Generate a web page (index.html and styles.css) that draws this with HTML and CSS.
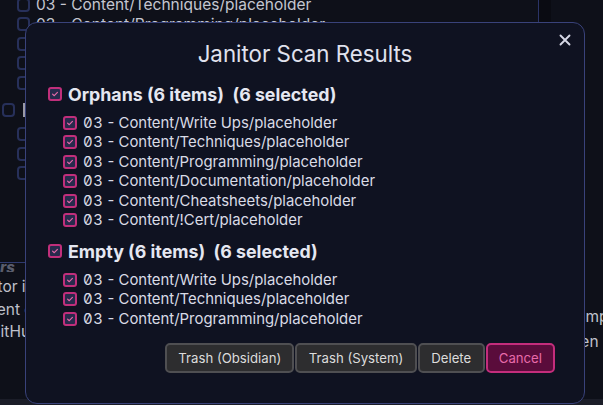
FILE: index.html
```html
<!DOCTYPE html>
<html>
<head>
<meta charset="utf-8">
<link rel="stylesheet" href="styles.css">
</head>
<body>
<div class="page">
  <div class="top">
    <div class="listpane">
      <div class="bg-row shift-up"><span class="bg-cb"></span><span>03 - Content/Techniques/placeholder</span></div>
      <div class="bg-row"><span class="bg-cb"></span><span>03 - Content/Programming/placeholder</span></div>
      <div class="bg-row"><span class="bg-cb"></span><span>03 - Content/Documentation/placeholder</span></div>
      <div class="bg-row"><span class="bg-cb"></span><span>03 - Content/Cheatsheets/placeholder</span></div>
      <div class="bg-row"><span class="bg-cb"></span><span>03 - Content/!Cert/placeholder</span></div>
      <div class="bg-group"><span class="bg-cb"></span><span class="bg-bar"></span><span>Empty (3 items)</span></div>
      <div class="bg-row"><span class="bg-cb"></span><span>03 - Content/Write Ups/placeholder</span></div>
      <div class="bg-row"><span class="bg-cb"></span><span>03 - Content/Techniques/placeholder</span></div>
      <div class="bg-row"><span class="bg-cb"></span><span>03 - Content/Programming/placeholder</span></div>
    </div>
    <div class="scroll-strip"></div>
    <div class="rightpane"></div>
  </div>
  <div class="doc">
    <div class="doc-left">
      <div class="doc-heading">Cursors</div>
      <p class="doc-line l1">Janitor is a plugin</p>
      <p class="doc-line l2">Content cleanup</p>
      <p class="doc-line l3">GitHub page</p>
    </div>
    <div class="doc-right">
      <p class="doc-line r1">Example</p>
      <p class="doc-line r2">Open page</p>
    </div>
  </div>
  <div class="statusbar"></div>
</div>

<div class="modal">
  <button class="close" aria-label="Close">
    <svg width="12" height="12" viewBox="0 0 12 12"><path d="M1.5 1.5 L10.5 10.5 M10.5 1.5 L1.5 10.5" stroke="#d6d8e6" stroke-width="1.9" stroke-linecap="round"/></svg>
  </button>
  <h1 class="title">Janitor Scan Results</h1>

  <div class="group">
    <label class="group-head"><span class="cb"><svg viewBox="0 0 14 14"><path d="M3.6 7.2 L6 9.4 L10.4 4.8" /></svg></span>Orphans (6 items)&nbsp; (6 selected)</label>
    <div class="items">
      <label class="item"><span class="cb"><svg viewBox="0 0 14 14"><path d="M3.6 7.2 L6 9.4 L10.4 4.8" /></svg></span><span class="num">03</span>&nbsp;- Content/Write Ups/placeholder</label>
      <label class="item"><span class="cb"><svg viewBox="0 0 14 14"><path d="M3.6 7.2 L6 9.4 L10.4 4.8" /></svg></span><span class="num">03</span>&nbsp;- Content/Techniques/placeholder</label>
      <label class="item"><span class="cb"><svg viewBox="0 0 14 14"><path d="M3.6 7.2 L6 9.4 L10.4 4.8" /></svg></span><span class="num">03</span>&nbsp;- Content/Programming/placeholder</label>
      <label class="item"><span class="cb"><svg viewBox="0 0 14 14"><path d="M3.6 7.2 L6 9.4 L10.4 4.8" /></svg></span><span class="num">03</span>&nbsp;- Content/Documentation/placeholder</label>
      <label class="item"><span class="cb"><svg viewBox="0 0 14 14"><path d="M3.6 7.2 L6 9.4 L10.4 4.8" /></svg></span><span class="num">03</span>&nbsp;- Content/Cheatsheets/placeholder</label>
      <label class="item"><span class="cb"><svg viewBox="0 0 14 14"><path d="M3.6 7.2 L6 9.4 L10.4 4.8" /></svg></span><span class="num">03</span>&nbsp;- Content/!Cert/placeholder</label>
    </div>
  </div>

  <div class="group">
    <label class="group-head"><span class="cb"><svg viewBox="0 0 14 14"><path d="M3.6 7.2 L6 9.4 L10.4 4.8" /></svg></span>Empty (6 items)&nbsp; (6 selected)</label>
    <div class="items">
      <label class="item"><span class="cb"><svg viewBox="0 0 14 14"><path d="M3.6 7.2 L6 9.4 L10.4 4.8" /></svg></span><span class="num">03</span>&nbsp;- Content/Write Ups/placeholder</label>
      <label class="item"><span class="cb"><svg viewBox="0 0 14 14"><path d="M3.6 7.2 L6 9.4 L10.4 4.8" /></svg></span><span class="num">03</span>&nbsp;- Content/Techniques/placeholder</label>
      <label class="item"><span class="cb"><svg viewBox="0 0 14 14"><path d="M3.6 7.2 L6 9.4 L10.4 4.8" /></svg></span><span class="num">03</span>&nbsp;- Content/Programming/placeholder</label>
    </div>
  </div>

  <div class="buttons">
    <button class="btn">Trash (Obsidian)</button>
    <button class="btn">Trash (System)</button>
    <button class="btn">Delete</button>
    <button class="btn cancel">Cancel</button>
  </div>
</div>
</body>
</html>
```

FILE: styles.css
```css
* { box-sizing: border-box; }
html, body {
  margin: 0;
  padding: 0;
  width: 603px;
  height: 405px;
  overflow: hidden;
  background: #0e1019;
  font-family: Inter, "Noto Sans", sans-serif;
}
.page {
  width: 603px;
  height: 405px;
  display: flex;
  flex-direction: column;
  overflow: hidden;
  position: relative;
}
.top {
  display: flex;
  height: 250px;
  flex: none;
}
.listpane {
  width: 539px;
  border-right: 1px solid #2b3467;
  padding-left: 2px;
  color: #c4c6d0;
  font-size: 15.5px;
  overflow: hidden;
}
.scroll-strip { width: 12px; background: #0a0b12; }
.rightpane { flex: 1; background: #0e1019; }
.bg-row {
  display: flex;
  align-items: center;
  gap: 6px;
  height: 19.5px;
  padding-left: 15px;
  white-space: nowrap;
}
.shift-up { margin-top: -5px; }
.bg-group {
  display: flex;
  align-items: center;
  gap: 7px;
  height: 26px;
  margin: 4px 0 2px;
  white-space: nowrap;
}
.bg-bar { width: 4px; height: 14px; background: #9a9aa6; margin-left: 1px; }
.bg-cb {
  width: 13px;
  height: 14px;
  border: 2px solid #27305a;
  border-radius: 4px;
  flex: none;
}
.doc {
  flex: 1;
  display: flex;
  color: #bfc1cb;
  font-size: 15.5px;
  overflow: hidden;
}
.doc-left {
  width: 300px;
  flex: none;
}
.doc-heading {
  border-top: 1px solid #2f3a6e;
  margin-top: 12px;
  font-weight: 800;
  font-style: italic;
  font-size: 15px;
  color: #5a5d6c;
  line-height: 10px;
  height: 10px;
  overflow: hidden;
  margin-left: -45px;
}
.doc-line {
  margin: 0;
  line-height: 22.5px;
  white-space: nowrap;
}
.doc-heading + .doc-line { margin-top: 4px; }
.l1 { margin-left: -33px; }
.l2 { margin-left: -38px; }
.l3 { margin-left: -11px; }
.doc-right {
  flex: 1;
  padding-left: 257px;
  padding-top: 54px;
}
.doc-right .doc-line { line-height: 25px; }
.r1 { margin-left: 2px; }
.r2 { margin-left: 2px; }
.statusbar {
  position: absolute;
  left: 0;
  right: 0;
  bottom: 0;
  height: 6px;
  background: #1b1d28;
}

/* modal */
.modal {
  position: absolute;
  left: 25px;
  top: 22px;
  width: 560px;
  height: 382px;
  background: #0f1221;
  border: 1px solid #39427a;
  border-radius: 12px;
  padding: 16px 29px 0 22px;
  color: #d9dbe6;
  display: flex;
  flex-direction: column;
}
.close {
  position: absolute;
  right: 11px;
  top: 9px;
  width: 16px;
  height: 16px;
  background: none;
  border: none;
  padding: 2px;
  display: flex;
  align-items: center;
  justify-content: center;
}
.title {
  margin: 0;
  text-align: center;
  font-weight: 400;
  font-size: 22.3px;
  line-height: 30px;
  color: #e0e2ee;
  padding-left: 8px;
  padding-right: 1px;
}
.group { display: flex; flex-direction: column; }
.group:first-of-type { margin-top: 14px; }
.group + .group { margin-top: 10px; }
.group-head {
  display: flex;
  align-items: center;
  gap: 6px;
  height: 22px;
  font-weight: 700;
  font-size: 17.8px;
  color: #e5e7f1;
  white-space: pre;
}
.items {
  display: flex;
  flex-direction: column;
  padding-left: 15px;
  margin-top: 8px;
}
.item {
  display: flex;
  align-items: center;
  height: 19.5px;
  font-size: 14.9px;
  color: #d9dbe6;
  white-space: nowrap;
}
.item .cb { margin-right: 6px; }
.num {
  font-feature-settings: "tnum" 1, "zero" 1;
  letter-spacing: 0.5px;
}
.cb {
  width: 14px;
  height: 14px;
  border: 2px solid #c02f7b;
  border-radius: 3px;
  background: #272a4c;
  flex: none;
  display: flex;
}
.cb svg {
  width: 10px;
  height: 10px;
  fill: none;
  stroke: #e86aaa;
  stroke-width: 1.6;
  stroke-linecap: round;
  stroke-linejoin: round;
}
.buttons {
  display: flex;
  justify-content: flex-end;
  gap: 1px;
  margin-top: 14px;
}
.btn {
  margin: 0;
  height: 30px;
  padding: 0 11.5px;
  font-family: Inter, "Noto Sans", sans-serif;
  font-size: 13.2px;
  color: #dcdcdc;
  background: #2d2d2f;
  border: 2px solid #4f4f52;
  border-radius: 5px;
}
.btn:first-child { padding: 0 11px; }
.btn.cancel {
  background: #5a0c3b;
  border-color: #c42d7c;
  color: #e86aaa;
  padding: 0 11px;
}
```
